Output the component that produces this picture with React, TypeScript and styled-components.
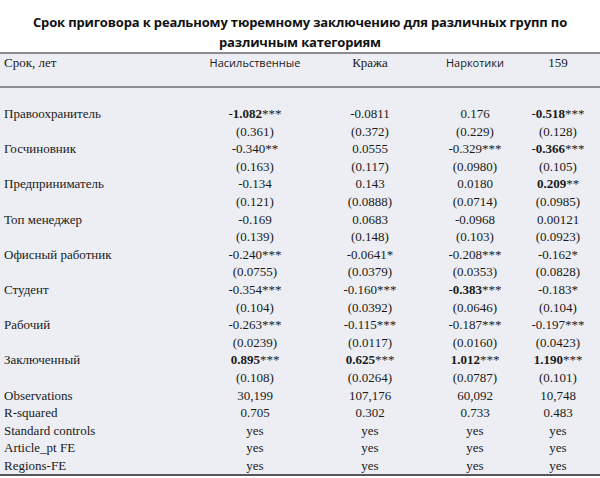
import React from "react"
import styled, { createGlobalStyle } from "styled-components"

const GlobalStyle = createGlobalStyle`
  html, body {
    margin: 0;
    padding: 0;
    background: #ffffff;
  }
  body {
    width: 600px;
    height: 478px;
    overflow: hidden;
  }
`

type Cell = { v: string; b?: boolean }

const c = (v: string, b?: boolean): Cell => ({ v, b })

const rows: { label: string; coef: Cell[]; se: string[] }[] = [
  {
    label: "Правоохранитель",
    coef: [c("-1.082***", true), c("-0.0811"), c("0.176"), c("-0.518***", true)],
    se: ["(0.361)", "(0.372)", "(0.229)", "(0.128)"],
  },
  {
    label: "Госчиновник",
    coef: [c("-0.340**"), c("0.0555"), c("-0.329***"), c("-0.366***", true)],
    se: ["(0.163)", "(0.117)", "(0.0980)", "(0.105)"],
  },
  {
    label: "Предприниматель",
    coef: [c("-0.134"), c("0.143"), c("0.0180"), c("0.209**", true)],
    se: ["(0.121)", "(0.0888)", "(0.0714)", "(0.0985)"],
  },
  {
    label: "Топ менеджер",
    coef: [c("-0.169"), c("0.0683"), c("-0.0968"), c("0.00121")],
    se: ["(0.139)", "(0.148)", "(0.103)", "(0.0923)"],
  },
  {
    label: "Офисный работник",
    coef: [c("-0.240***"), c("-0.0641*"), c("-0.208***"), c("-0.162*")],
    se: ["(0.0755)", "(0.0379)", "(0.0353)", "(0.0828)"],
  },
  {
    label: "Студент",
    coef: [c("-0.354***"), c("-0.160***"), c("-0.383***", true), c("-0.183*")],
    se: ["(0.104)", "(0.0392)", "(0.0646)", "(0.104)"],
  },
  {
    label: "Рабочий",
    coef: [c("-0.263***"), c("-0.115***"), c("-0.187***"), c("-0.197***")],
    se: ["(0.0239)", "(0.0117)", "(0.0160)", "(0.0423)"],
  },
  {
    label: "Заключенный",
    coef: [c("0.895***", true), c("0.625***", true), c("1.012***", true), c("1.190***", true)],
    se: ["(0.108)", "(0.0264)", "(0.0787)", "(0.101)"],
  },
]

const stats: { label: string; vals: string[] }[] = [
  { label: "Observations", vals: ["30,199", "107,176", "60,092", "10,748"] },
  { label: "R-squared", vals: ["0.705", "0.302", "0.733", "0.483"] },
  { label: "Standard controls", vals: ["yes", "yes", "yes", "yes"] },
  { label: "Article_pt FE", vals: ["yes", "yes", "yes", "yes"] },
  { label: "Regions-FE", vals: ["yes", "yes", "yes", "yes"] },
]

const Value = ({ cell }: { cell: Cell }) => {
  if (!cell.b) return <>{cell.v}</>
  const m = cell.v.match(/^(-?)([\d.]+)(\**)$/)
  if (!m) return <b>{cell.v}</b>
  return (
    <>
      {m[1]}
      <b>{m[2]}</b>
      <Stars>{m[3]}</Stars>
    </>
  )
}

const App: React.FC = () => {
  return (
    <Page>
      <GlobalStyle />
      <Title>
        Срок приговора к реальному тюремному заключению для различных групп по
        <br />
        различным категориям
      </Title>
      <Table>
        <HeadRow>
          <Label>Срок, лет</Label>
          <HeadCell $sans>Насильственные</HeadCell>
          <HeadCell>Кража</HeadCell>
          <HeadCell $sans>Наркотики</HeadCell>
          <HeadCell>159</HeadCell>
        </HeadRow>
        <Body>
          <Spacer />
          {rows.map((r) => (
            <React.Fragment key={r.label}>
              <Row>
                <Label>{r.label}</Label>
                {r.coef.map((cell, i) => (
                  <Num key={i}>
                    <Value cell={cell} />
                  </Num>
                ))}
              </Row>
              <Row>
                <Label />
                {r.se.map((s, i) => (
                  <Num key={i}>{s}</Num>
                ))}
              </Row>
            </React.Fragment>
          ))}
          {stats.map((s) => (
            <Row key={s.label}>
              <Label>{s.label}</Label>
              {s.vals.map((v, i) => (
                <Num key={i}>{v}</Num>
              ))}
            </Row>
          ))}
        </Body>
      </Table>
    </Page>
  )
}

const Page = styled.div`
  width: 600px;
  height: 478px;
  background: #ffffff;
  display: flex;
  flex-direction: column;
`

const Title = styled.div`
  padding-top: 12px;
  height: 52px;
  box-sizing: border-box;
  text-align: center;
  font-family: "Open Sans", "Liberation Sans", sans-serif;
  font-weight: 700;
  font-size: 13px;
  line-height: 20px;
  color: #111;
  letter-spacing: -0.15px;
`

const Table = styled.div`
  background: #eceef3;
  border-top: 2px solid #8a8c90;
  border-bottom: 2px solid #55575a;
  font-family: "Liberation Serif", "Times New Roman", serif;
  font-size: 13px;
  color: #1a1a1a;
`

const cols = `
  display: grid;
  grid-template-columns: 200px 110px 120px 90px 76px;
`

const HeadRow = styled.div`
  ${cols};
  height: 34px;
  padding-top: 1px;
  box-sizing: border-box;
  line-height: 16px;
  border-bottom: 2px solid #8a8c90;
`

const HeadCell = styled.div<{ $sans?: boolean }>`
  text-align: center;
  font-family: ${(p) =>
    p.$sans ? `"Open Sans", "Liberation Sans", sans-serif` : `"Liberation Serif", serif`};
  font-size: ${(p) => (p.$sans ? "11px" : "13px")};
`

const Body = styled.div`
  display: flex;
  flex-direction: column;
`

const Spacer = styled.div`
  height: 17px;
`

const Row = styled.div`
  ${cols};
  height: 17.6px;
  line-height: 17.6px;
`

const Label = styled.div`
  padding-left: 4px;
  white-space: nowrap;
`

const Num = styled.div`
  text-align: center;
  white-space: nowrap;
`

const Stars = styled.span`
  font-weight: 400;
`

export default App
